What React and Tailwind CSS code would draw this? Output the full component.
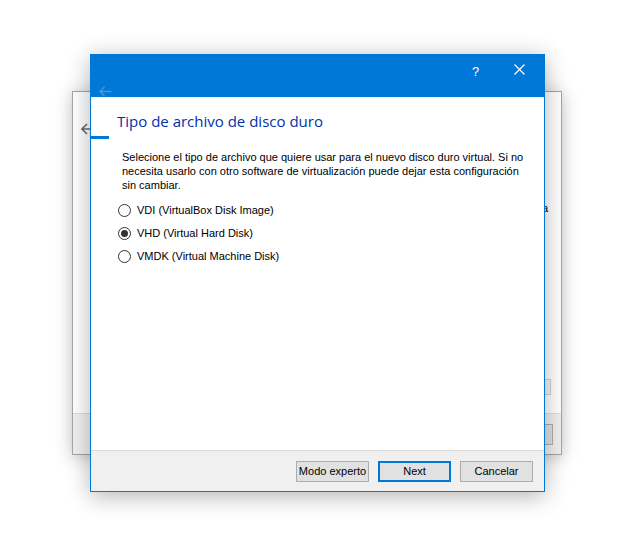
import React from 'react';

const Radio = ({ checked, label }) => (
  <div className="flex items-center h-[23px]">
    <span className="w-[13px] h-[13px] rounded-full border border-[#333] bg-white flex items-center justify-center">
      {checked && <span className="w-[7px] h-[7px] rounded-full bg-[#333]"></span>}
    </span>
    <span className="ml-[6px] text-[11px] text-black">{label}</span>
  </div>
);

const Btn = ({ children, primary }) => (
  <div className={`w-[73px] h-[21px] flex items-center justify-center whitespace-nowrap text-[11px] text-black bg-[#e1e1e1] ${primary ? 'border-2 border-[#0078d7]' : 'border border-[#adadad]'}`}>
    {children}
  </div>
);

export default function App() {
  return (
    <div className="w-[631px] h-[553px] bg-white relative overflow-hidden" style={{ fontFamily: '"Liberation Sans", Arial, sans-serif' }}>
      {/* background wizard window */}
      <div className="absolute left-[72px] top-[91px] w-[490px] h-[364px] border border-[#a5a5a5] bg-white shadow-[0_2px_16px_rgba(0,0,0,0.25)] flex flex-col">
        <div className="flex-1 relative">
          <svg className="absolute left-[8px] top-[31px]" width="14" height="12" viewBox="0 0 14 12">
            <path d="M6 1 L1 6 L6 11 M1 6 H13" stroke="#6e6e6e" strokeWidth="1.6" fill="none" />
          </svg>
          <span className="absolute left-[469px] top-[108px] text-[11px] text-black">a</span>
          <div className="absolute left-[470px] top-[287px] w-[8px] h-[16px] border border-[#d0d0d0] bg-[#f4f4f4]"></div>
        </div>
        <div className="h-[41px] bg-[#f0f0f0] border-t border-[#dcdcdc] relative">
          <div className="absolute left-[468px] top-[10px] w-[12px] h-[21px] border border-[#adadad] bg-[#e1e1e1]"></div>
        </div>
      </div>

      {/* front dialog */}
      <div className="absolute left-[90px] top-[54px] w-[455px] h-[438px] bg-white border border-[#0078d7] shadow-[0_4px_22px_rgba(0,0,0,0.3)] flex flex-col">
        <div className="h-[42px] bg-[#0078d7] relative">
          <svg className="absolute left-[8px] top-[31px]" width="13" height="11" viewBox="0 0 13 11">
            <path d="M5.5 0.8 L1 5.5 L5.5 10.2 M1 5.5 H12.5" stroke="#4c93d8" strokeWidth="1.5" fill="none" />
          </svg>
          <span className="absolute left-[381px] top-[7px] text-[13px] text-white">?</span>
          <svg className="absolute left-[423px] top-[9px]" width="11" height="11" viewBox="0 0 11 11">
            <path d="M0.5 0.5 L10.5 10.5 M10.5 0.5 L0.5 10.5" stroke="white" strokeWidth="1.2" />
          </svg>
        </div>
        <div className="flex-1 flex flex-col">
          <div className="pl-[26px] pt-[14px] text-[15px] text-[#0033aa] leading-[20px]" style={{ fontFamily: '"Open Sans", "Noto Sans", sans-serif' }}>
            Tipo de archivo de disco duro
          </div>
          <div className="mt-[5px] w-[18px] h-[3px] bg-[#0078d7]"></div>
          <div className="pl-[31px] pr-[17px] pt-[11px] text-[11px] leading-[14px] text-black">
            Selecione el tipo de archivo que quiere usar para el nuevo disco duro virtual. Si no necesita usarlo con otro software de virtualización puede dejar esta configuración sin cambiar.
          </div>
          <div className="pl-[27px] pt-[7px] flex flex-col">
            <Radio label="VDI (VirtualBox Disk Image)" />
            <Radio checked label="VHD (Virtual Hard Disk)" />
            <Radio label="VMDK (Virtual Machine Disk)" />
          </div>
        </div>
        <div className="h-[41px] bg-[#f0f0f0] border-t border-[#dcdcdc] flex items-center justify-end gap-[9px] pr-[11px]">
          <Btn>Modo experto</Btn>
          <Btn primary>Next</Btn>
          <Btn>Cancelar</Btn>
        </div>
      </div>
    </div>
  );
}
